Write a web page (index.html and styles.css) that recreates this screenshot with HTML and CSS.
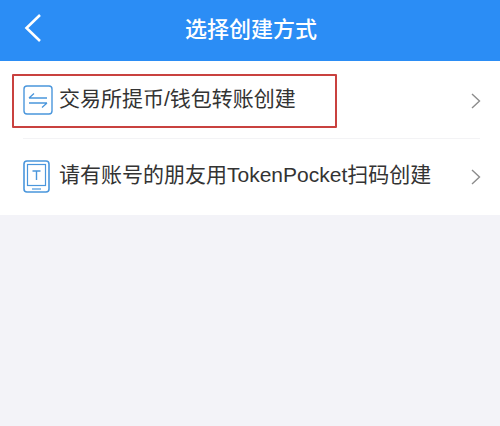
FILE: index.html
```html
<!DOCTYPE html>
<html lang="zh">
<head>
<meta charset="utf-8">
<title>选择创建方式</title>
<link rel="stylesheet" href="styles.css">
</head>
<body>
<header class="bar">
  <svg class="back" width="18" height="30" viewBox="0 0 18 30"><path d="M16 2 L2.5 15 L16 28" fill="none" stroke="#fff" stroke-width="2.6"/></svg>
  <h1 class="title">选择创建方式</h1>
</header>
<main class="list">
  <a class="row row-first">
    <svg class="icon" width="30" height="30" viewBox="0 0 30 30" fill="none" stroke="#4a96dc" stroke-width="1.3">
      <rect x="1" y="1" width="28" height="28" rx="3" stroke-width="1.4"/>
      <path d="M6 13 H24 M6 13 L11 8.5 M6 18 H24 M24 18 L19 22.5"/>
    </svg>
    <span class="label">交易所提币/钱包转账创建</span>
    <svg class="chev" width="10" height="16" viewBox="0 0 10 16"><path d="M1 1 L8.5 8 L1 15" fill="none" stroke="#8c8c8c" stroke-width="1.4"/></svg>
  </a>
  <a class="row">
    <svg class="icon icon-tall" width="27" height="33" viewBox="0 0 27 33" fill="none" stroke="#4a96dc">
      <rect x="1" y="1" width="25" height="31" rx="3" stroke-width="1.6"/>
      <rect x="4.5" y="4.5" width="18" height="21" stroke-width="1.2"/>
      <path d="M9.5 11 H17.5 M13.5 11 V20" stroke-width="1.4"/>
      <path d="M9 29 H18" stroke-width="1.2"/>
    </svg>
    <span class="label">请有账号的朋友用TokenPocket扫码创建</span>
    <svg class="chev" width="10" height="16" viewBox="0 0 10 16"><path d="M1 1 L8.5 8 L1 15" fill="none" stroke="#8c8c8c" stroke-width="1.4"/></svg>
  </a>
  <div class="mark"></div>
</main>
</body>
</html>
```
FILE: styles.css
```css
* { box-sizing: border-box; }
html, body { margin: 0; height: 100%; }
body {
  background: #f3f3f8;
  font-family: "Liberation Sans", "Noto Sans CJK SC", sans-serif;
  overflow: hidden;
}
.bar {
  position: relative;
  height: 61px;
  background: #2b8df5;
  display: flex;
  align-items: center;
  justify-content: center;
}
.back { position: absolute; left: 24px; top: 13px; }
.title {
  margin: 0 0 2px 2px;
  color: #fff;
  font-size: 22px;
  font-weight: 500;
  line-height: 59px;
}
.list { position: relative; background: #fff; height: 154px; }
.row {
  height: 76px;
  padding: 0 19px 0 23px;
  display: flex;
  align-items: center;
  color: #333;
}
.row-first { height: 77px; }
.row-first::after {
  content: "";
  position: absolute;
  left: 23px;
  right: 20px;
  top: 77px;
  height: 1px;
  background: #f3f3f5;
}
.icon { flex: none; margin-right: 6px; }
.icon-tall { margin-right: 9px; }
.label { flex: 1; font-size: 21px; line-height: 30px; padding-bottom: 2px; white-space: nowrap; }
.chev { flex: none; margin-top: 2px; }
.mark {
  position: absolute;
  left: 12px;
  top: 13px;
  width: 325px;
  height: 54px;
  border: 2px solid #c9413f;
  border-radius: 1px;
}
```
